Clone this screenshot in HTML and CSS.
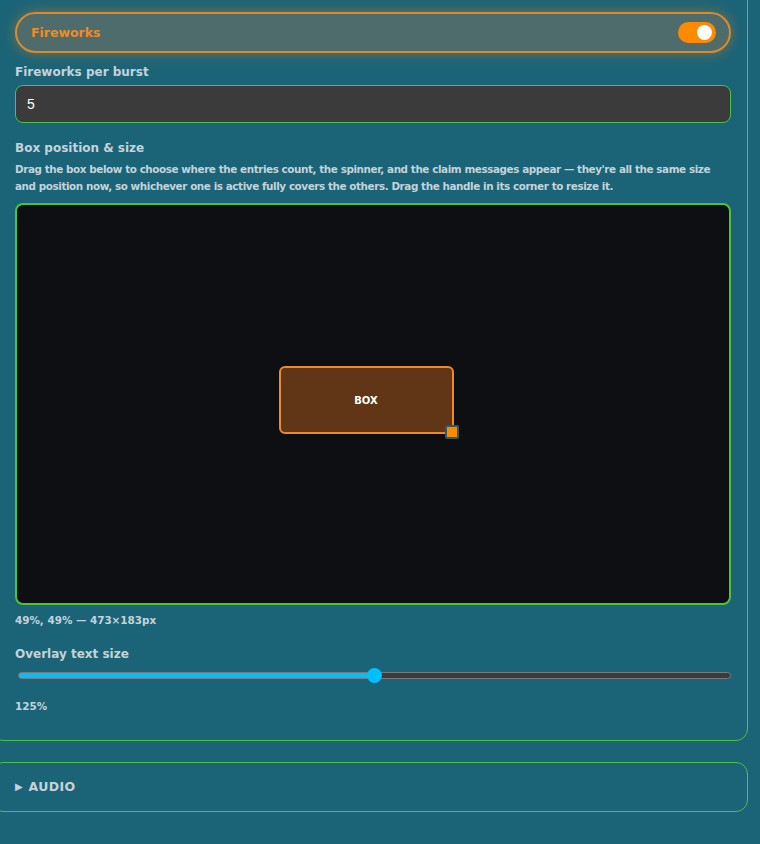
FILE: index.html
```html
<!DOCTYPE html>
<html lang="en">
<head>
<meta charset="UTF-8" />
<meta name="viewport" content="width=device-width, initial-scale=1.0" />
<title>Overlay settings</title>
<link rel="stylesheet" href="styles.css">
</head>
<body>

<div class="panel">
  <!-- Fireworks toggle -->
  <div class="feature-pill">
    <span class="feature-name">Fireworks</span>
    <span class="toggle on"><span class="knob"></span></span>
  </div>

  <label class="field-label" for="burst">Fireworks per burst</label>
  <input class="text-input" id="burst" type="text" value="5" />

  <div class="field-label spaced">Box position &amp; size</div>
  <p class="hint">Drag the box below to choose where the entries count, the spinner, and the claim messages appear — they're all the same size and position now, so whichever one is active fully covers the others. Drag the handle in its corner to resize it.</p>

  <!-- Редактор позиции -->
  <div class="stage">
    <div class="drag-box">
      BOX
      <span class="resize-handle"></span>
    </div>
  </div>
  <div class="readout">49%, 49% — 473×183px</div>

  <div class="field-label wide">Overlay text size</div>
  <input class="range" type="range" min="50" max="200" value="125" style="--fill: 50%" />
  <div class="readout low">125%</div>
</div>

<div class="panel collapsed">
  <span class="caret">▶</span> AUDIO
</div>

</body>
</html>
```

FILE: styles.css
```css
body {
  font-family: "DejaVu Sans", Arial, sans-serif;
  font-weight: bold;
  background-color: #1b6477;
  color: #c3d3d9;
  margin: 0;
  padding: 0;
}
.panel {
  margin: -30px 12px 0 -9px;
  padding: 41px 16px 28px 23px;
  border: 1px solid #4cc24a;
  border-radius: 12px;
}
.panel.collapsed {
  margin-top: 21px;
  padding: 15px 24px 15px 23px;
  font-size: 12.5px;
  letter-spacing: 0.4px;
  line-height: 18px;
}
.caret {
  font-size: 10px;
  letter-spacing: 0;
  margin-right: 1px;
  vertical-align: 1px;
}
.feature-pill {
  display: flex;
  align-items: center;
  justify-content: space-between;
  height: 37px;
  padding: 0 13px 0 14px;
  background-color: #4e6c6b;
  border: 2px solid #dc8a2c;
  border-radius: 22px;
  box-shadow: 0 0 14px rgba(230, 130, 30, 0.45);
}
.feature-name {
  color: #f08a24;
  font-size: 12.5px;
}
.toggle {
  width: 38px;
  height: 21px;
  border-radius: 11px;
  background-color: #ff8a00;
  display: flex;
  align-items: center;
  justify-content: flex-end;
  padding: 0 4px;
  box-sizing: border-box;
}
.knob {
  width: 15px;
  height: 15px;
  border-radius: 50%;
  background-color: #fff;
}
.field-label {
  display: block;
  font-size: 12px;
  margin: 12px 0 6px;
}
.field-label.spaced {
  margin-top: 18px;
}
.field-label.wide {
  margin-top: 21px;
  margin-bottom: 4px;
}
.text-input {
  display: block;
  width: 100%;
  box-sizing: border-box;
  height: 38px;
  padding: 0 11px;
  background-color: #3b3b3b;
  border: 1px solid #4cc24a;
  border-radius: 8px;
  color: #fff;
  font-family: Arial, sans-serif;
  font-size: 14px;
  font-weight: normal;
}
.hint {
  font-size: 10.4px;
  letter-spacing: -0.42px;
  line-height: 17px;
  margin: 0 0 8px;
}
.stage {
  height: 398px;
  background-color: #0d0f13;
  border: 2px solid #4cc43a;
  border-radius: 8px;
  display: flex;
  align-items: center;
  justify-content: center;
}
.drag-box {
  position: relative;
  width: 171px;
  height: 64px;
  background-color: #613616;
  border: 2px solid #f08a24;
  border-radius: 6px;
  color: #fff;
  font-size: 10px;
  display: flex;
  align-items: center;
  justify-content: center;
  margin-left: -14px;
  margin-top: -8px;
}
.resize-handle {
  position: absolute;
  right: -7px;
  bottom: -7px;
  width: 10px;
  height: 10px;
  background-color: #ff8a00;
  border: 2px solid #2e5a63;
  border-radius: 2px;
}
.readout {
  font-size: 10.4px;
  margin-top: 9px;
}
.readout.low {
  margin-top: 17px;
}
.range {
  -webkit-appearance: none;
  appearance: none;
  display: block;
  width: calc(100% - 3px);
  margin: 6px 0 0 3px;
  height: 16px;
  background: transparent;
}
.range::-webkit-slider-runnable-track {
  height: 7px;
  border-radius: 4px;
  border: 1px solid #7a7a7a;
  background: linear-gradient(to right, #00bfff var(--fill), #3b3b3b var(--fill));
}
.range::-webkit-slider-thumb {
  -webkit-appearance: none;
  width: 15px;
  height: 15px;
  margin-top: -5px;
  border-radius: 50%;
  background-color: #00bfff;
  border: none;
}
```
